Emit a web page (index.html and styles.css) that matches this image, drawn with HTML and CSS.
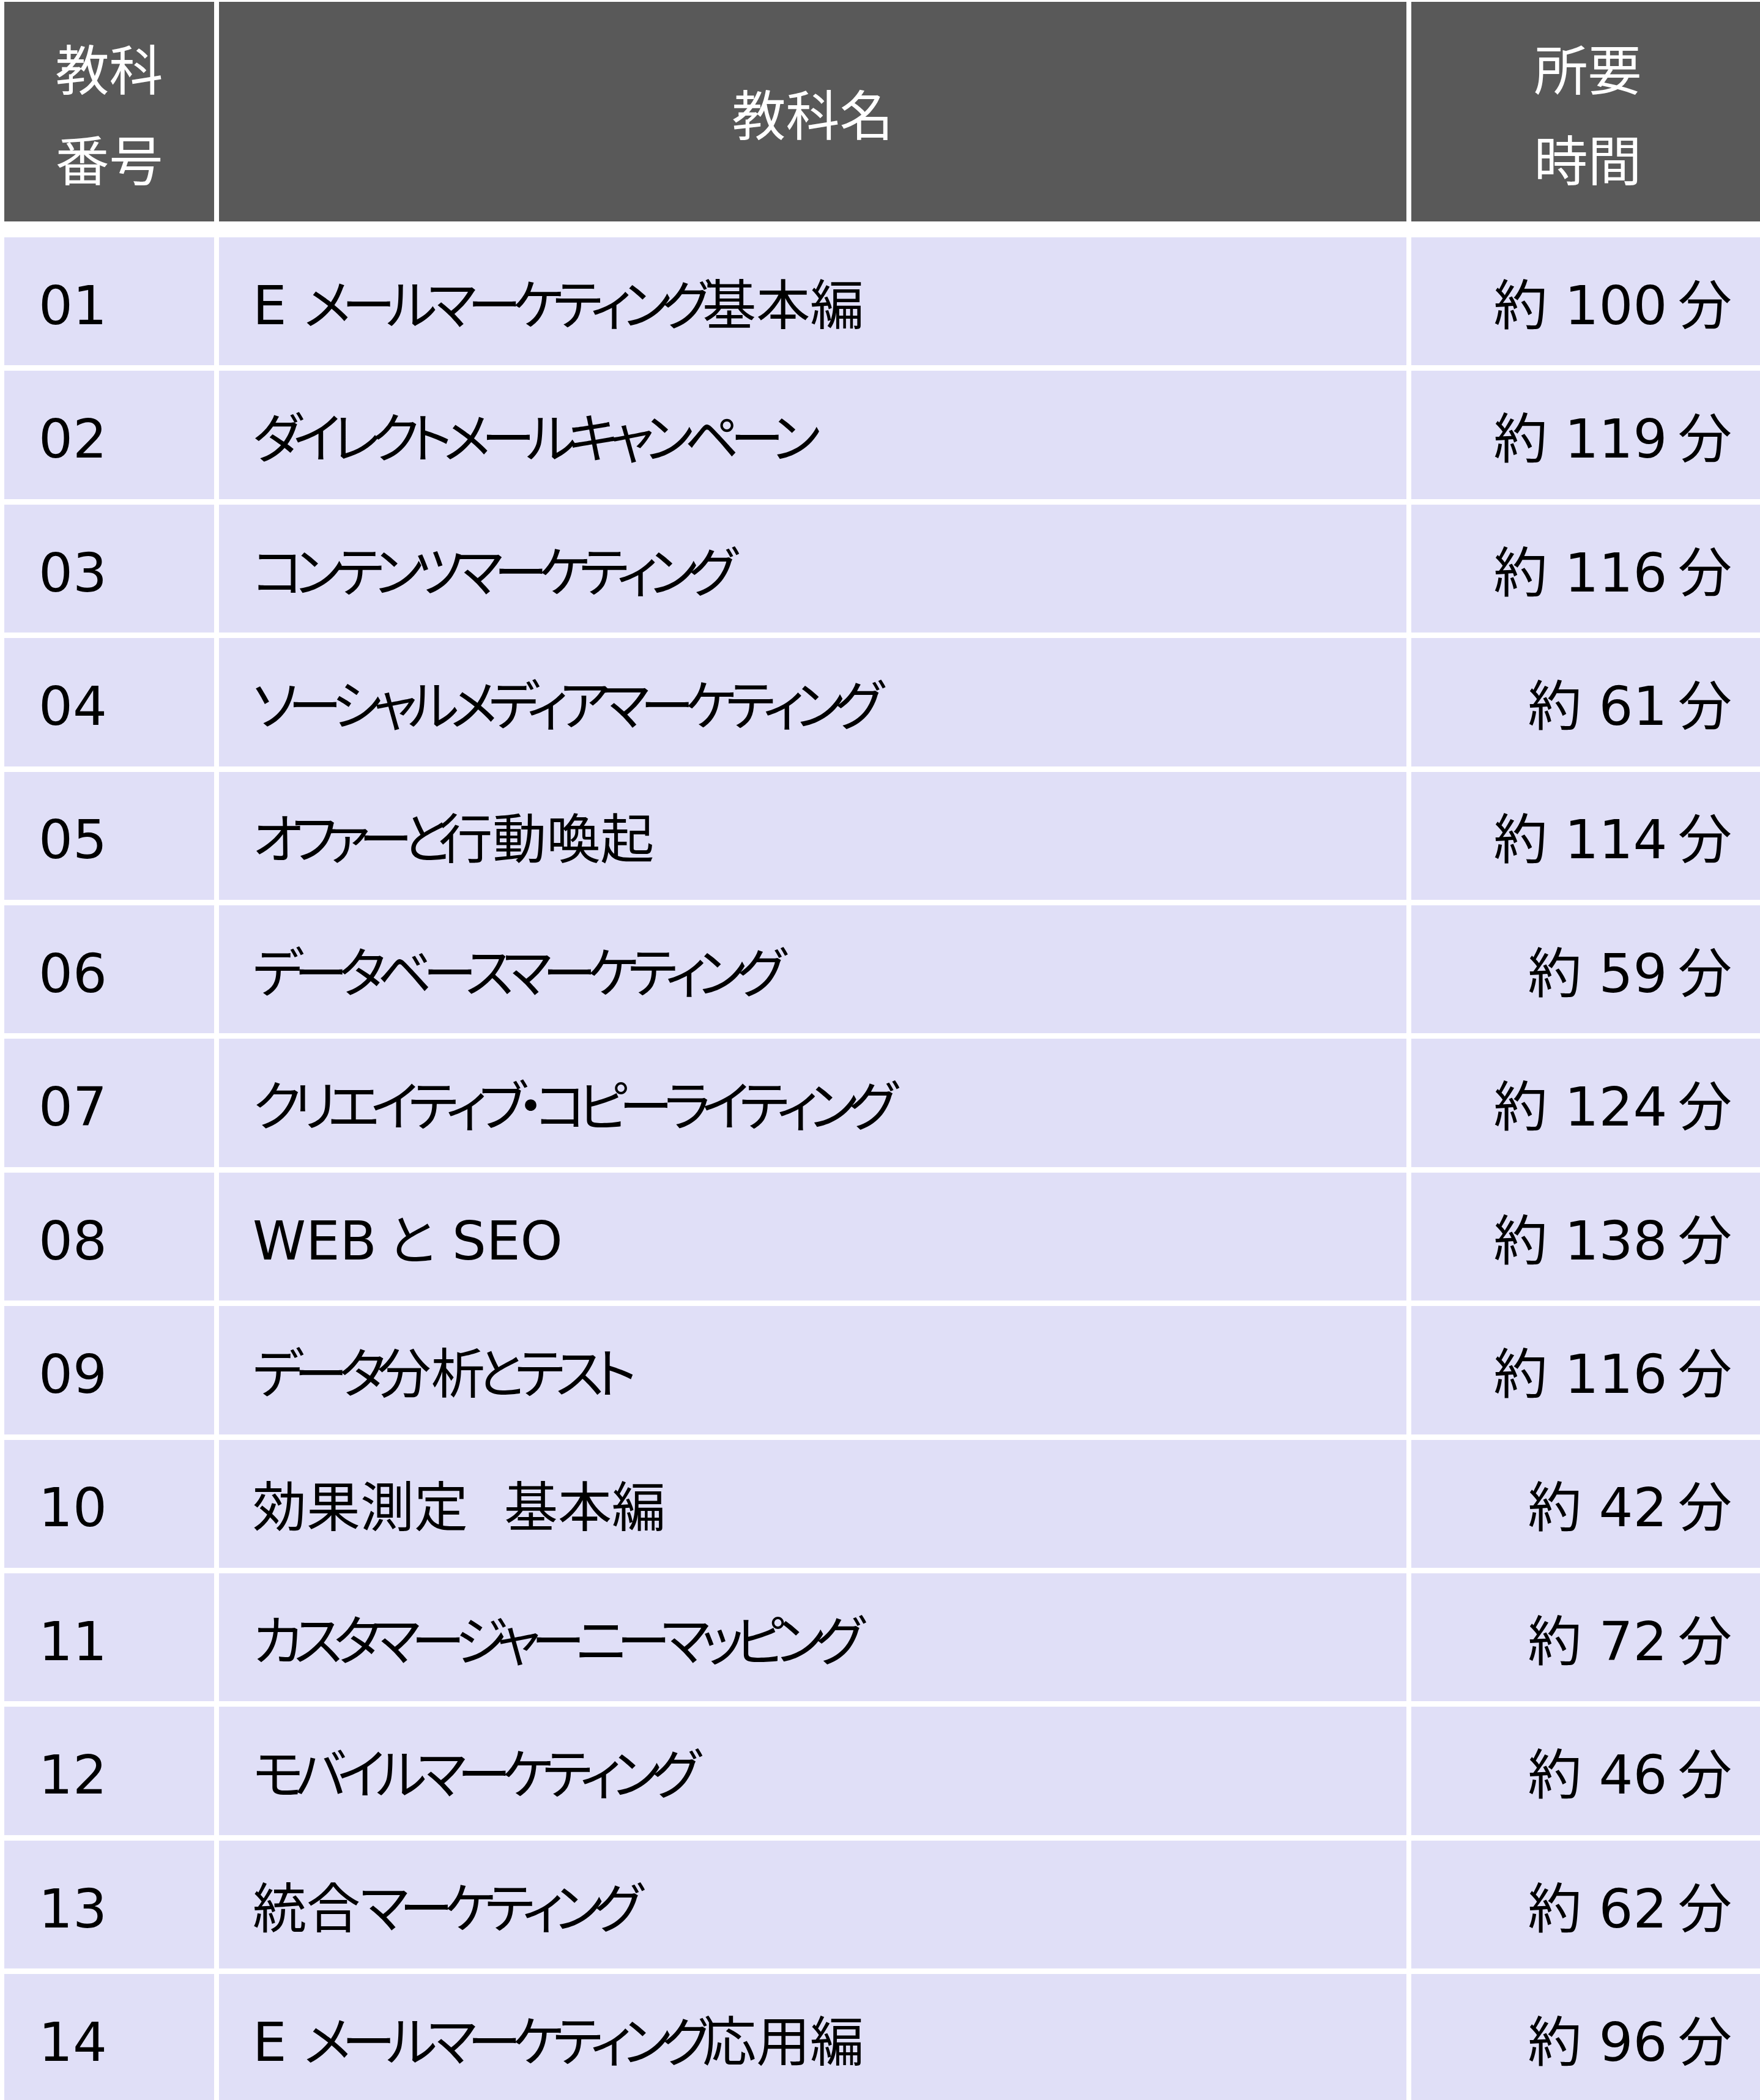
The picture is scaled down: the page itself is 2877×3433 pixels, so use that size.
FILE: index.html
```html
<!DOCTYPE html>
<html lang="ja">
<head>
<meta charset="utf-8">
<title>教科一覧</title>
<link rel="stylesheet" href="styles.css">
</head>
<body>
<div class="table">
  <div class="row head">
    <div class="cell c-no"><span class="hl">教科</span><span class="hl">番号</span></div>
    <div class="cell c-name">教科名</div>
    <div class="cell c-time"><span class="hl">所要</span><span class="hl">時間</span></div>
  </div>
  <div class="row"><div class="cell c-no">01</div><div class="cell c-name">E <span class="kn">メールマーケティング</span>基本編</div><div class="cell c-time">約 100&thinsp;分</div></div>
  <div class="row"><div class="cell c-no">02</div><div class="cell c-name"><span class="kn">ダイレクトメールキャンペーン</span></div><div class="cell c-time">約 119&thinsp;分</div></div>
  <div class="row"><div class="cell c-no">03</div><div class="cell c-name"><span class="kn">コンテンツマーケティング</span></div><div class="cell c-time">約 116&thinsp;分</div></div>
  <div class="row"><div class="cell c-no">04</div><div class="cell c-name"><span class="kn">ソーシャルメディアマーケティング</span></div><div class="cell c-time">約 61&thinsp;分</div></div>
  <div class="row"><div class="cell c-no">05</div><div class="cell c-name"><span class="kn kn-tight">オファーと</span>行動喚起</div><div class="cell c-time">約 114&thinsp;分</div></div>
  <div class="row"><div class="cell c-no">06</div><div class="cell c-name"><span class="kn">データベースマーケティング</span></div><div class="cell c-time">約 59&thinsp;分</div></div>
  <div class="row"><div class="cell c-no">07</div><div class="cell c-name"><span class="kn">クリエイティブ・コピーライティング</span></div><div class="cell c-time">約 124&thinsp;分</div></div>
  <div class="row"><div class="cell c-no">08</div><div class="cell c-name">WEB&thinsp;と SEO</div><div class="cell c-time">約 138&thinsp;分</div></div>
  <div class="row"><div class="cell c-no">09</div><div class="cell c-name"><span class="kn">データ</span>分<span class="kn">析とテスト</span></div><div class="cell c-time">約 116&thinsp;分</div></div>
  <div class="row"><div class="cell c-no">10</div><div class="cell c-name">効果測定<span class="wsp">　</span>基本編</div><div class="cell c-time">約 42&thinsp;分</div></div>
  <div class="row"><div class="cell c-no">11</div><div class="cell c-name"><span class="kn">カスタマージャーニーマッピング</span></div><div class="cell c-time">約 72&thinsp;分</div></div>
  <div class="row"><div class="cell c-no">12</div><div class="cell c-name"><span class="kn">モバイルマーケティング</span></div><div class="cell c-time">約 46&thinsp;分</div></div>
  <div class="row"><div class="cell c-no">13</div><div class="cell c-name">統合<span class="kn">マーケティング</span></div><div class="cell c-time">約 62&thinsp;分</div></div>
  <div class="row"><div class="cell c-no">14</div><div class="cell c-name">E <span class="kn">メールマーケティング</span>応用編</div><div class="cell c-time">約 96&thinsp;分</div></div>
</div>
</body>
</html>
```
FILE: styles.css
```css
html, body {
  margin: 0;
  padding: 0;
  overflow: hidden;
  background: #ffffff;
}

.table {
  display: flex;
  flex-direction: column;
  gap: 9px;
  padding: 3px 0 0 7px;
  width: max-content;
}

.row {
  display: grid;
  grid-template-columns: 343px 1941px 577px;
  column-gap: 8px;
  height: 209.4px;
}

.cell {
  display: flex;
  align-items: center;
  box-sizing: border-box;
  padding: 14px 53px 0;
  background: #e0dff7;
  color: #000000;
  font-family: "DejaVu Sans", "Noto Sans CJK JP", sans-serif;
  font-size: 88px;
  line-height: 1.2;
  font-feature-settings: "palt";
  white-space: pre;
}

.c-no {
  padding-left: 56px;
}

.c-name {
  padding-left: 55px;
}

.c-time {
  justify-content: flex-end;
}

.kn {
  letter-spacing: -0.16em;
}

.kn-tight {
  letter-spacing: -0.195em;
}

.wsp {
  letter-spacing: -0.33em;
}

.head {
  height: 359px;
  margin-bottom: 17px;
}

.head .cell {
  background: #595959;
  color: #ffffff;
  font-family: "Noto Sans CJK JP", sans-serif;
  flex-direction: column;
  justify-content: center;
  align-items: center;
  line-height: 148px;
  padding: 0;
}

.hl {
  display: block;
}
```
